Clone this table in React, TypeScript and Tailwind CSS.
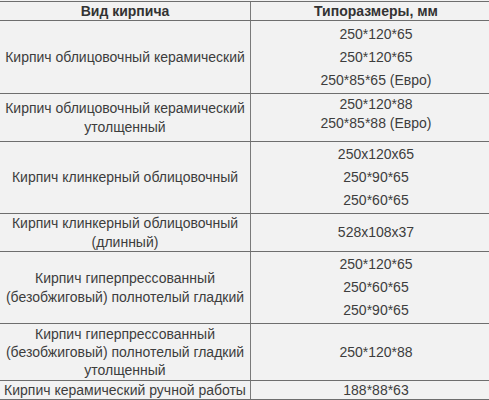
const rows: { h: string; left: string[]; leftLead: string; right: string[]; rightLead: string }[] = [
  {
    h: 'h-[73px]',
    left: ['Кирпич облицовочный керамический'],
    leftLead: 'leading-[19px]',
    right: ['250*120*65', '250*120*65', '250*85*65 (Евро)'],
    rightLead: 'leading-[23px]',
  },
  {
    h: 'h-[48px]',
    left: ['Кирпич облицовочный керамический', 'утолщенный'],
    leftLead: 'leading-[19px]',
    right: ['250*120*88', '250*85*88 (Евро)'],
    rightLead: 'leading-[19px] pb-[7px]',
  },
  {
    h: 'h-[72px]',
    left: ['Кирпич клинкерный облицовочный'],
    leftLead: 'leading-[19px]',
    right: ['250x120x65', '250*90*65', '250*60*65'],
    rightLead: 'leading-[23px]',
  },
  {
    h: 'h-[38px]',
    left: ['Кирпич клинкерный облицовочный', '(длинный)'],
    leftLead: 'leading-[19px]',
    right: ['528x108x37'],
    rightLead: 'leading-[19px]',
  },
  {
    h: 'h-[72px]',
    left: ['Кирпич гиперпрессованный', '(безобжиговый) полнотелый гладкий'],
    leftLead: 'leading-[19px]',
    right: ['250*120*65', '250*60*65', '250*90*65'],
    rightLead: 'leading-[23px]',
  },
  {
    h: 'h-[57px]',
    left: ['Кирпич гиперпрессованный', '(безобжиговый) полнотелый гладкий', 'утолщенный'],
    leftLead: 'leading-[18px]',
    right: ['250*120*88'],
    rightLead: 'leading-[19px]',
  },
  {
    h: 'h-[19px]',
    left: ['Кирпич керамический ручной работы'],
    leftLead: 'leading-[17px]',
    right: ['188*88*63'],
    rightLead: 'leading-[17px]',
  },
];

export default function App() {
  return (
    <div className="w-[489px] h-[400px] overflow-hidden bg-[#f2f2f2] pt-px font-['Liberation_Sans',Arial,sans-serif] text-[14px] text-[#3d3d3d]">
      <div className="w-[501px] border-t border-[#6e6e6e]">
        <div className="flex h-[19px] border-b border-[#6e6e6e] font-bold text-[#333]">
          <div className="w-[251px] shrink-0 border-r border-[#7a7a7a] flex items-center justify-center leading-[17px]">
            Вид кирпича
          </div>
          <div className="flex-1 flex items-center justify-center leading-[17px]">Типоразмеры, мм</div>
        </div>
        {rows.map((r, i) => (
          <div key={i} className={`flex ${r.h} border-b border-[#6e6e6e]`}>
            <div
              className={`w-[251px] shrink-0 border-r border-[#7a7a7a] flex flex-col items-center justify-center text-center ${r.leftLead}`}
            >
              {r.left.map(t => (
                <div key={t} className="whitespace-nowrap">{t}</div>
              ))}
            </div>
            <div className={`flex-1 flex flex-col items-center justify-center ${r.rightLead}`}>
              {r.right.map(t => (
                <div key={t}>{t}</div>
              ))}
            </div>
          </div>
        ))}
      </div>
    </div>
  );
}
